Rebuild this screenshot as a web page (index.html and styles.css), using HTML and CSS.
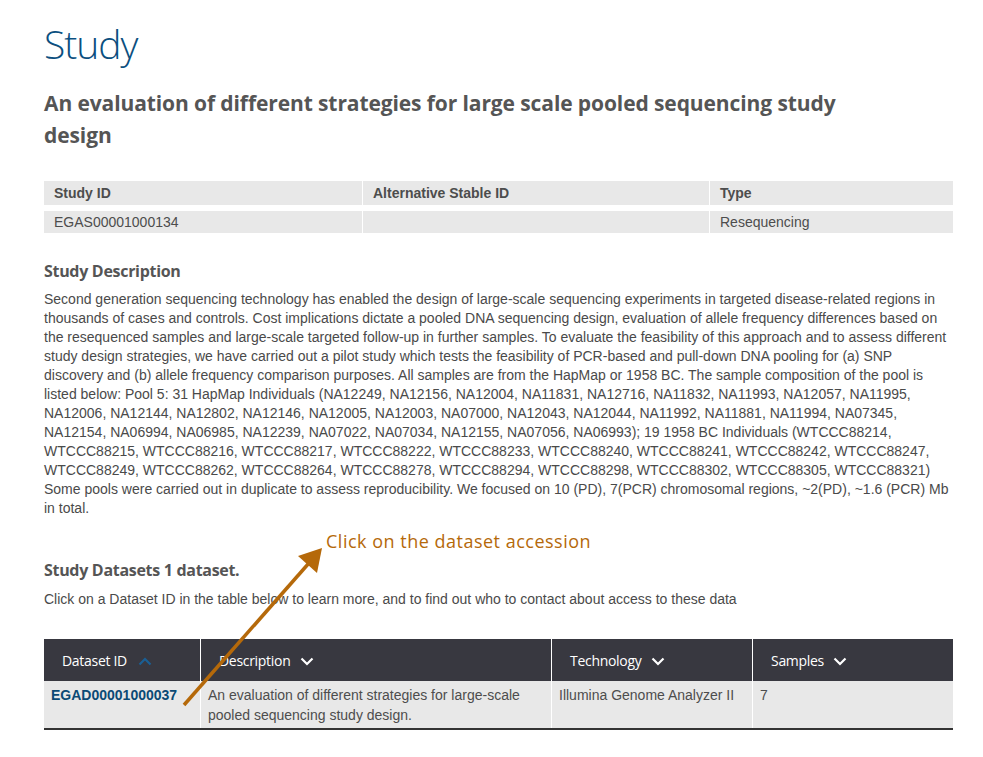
FILE: index.html
```html
<!DOCTYPE html>
<html>
<head>
<meta charset="utf-8">
<link rel="stylesheet" href="styles.css">
</head>
<body>
<div class="page">
  <h1 class="title">Study</h1>
  <h2 class="subtitle">An evaluation of different strategies for large scale pooled sequencing study design</h2>

  <table class="info">
    <thead>
      <tr><th class="c1">Study ID</th><th class="c2">Alternative Stable ID</th><th class="c3">Type</th></tr>
    </thead>
    <tbody>
      <tr><td>EGAS00001000134</td><td></td><td>Resequencing</td></tr>
    </tbody>
  </table>

  <h3 class="section">Study Description</h3>
  <p class="desc">Second generation sequencing technology has enabled the design of large-scale sequencing experiments in targeted disease-related regions in thousands of cases and controls. Cost implications dictate a pooled DNA sequencing design, evaluation of allele frequency differences based on the resequenced samples and large-scale targeted follow-up in further samples. To evaluate the feasibility of this approach and to assess different study design strategies, we have carried out a pilot study which tests the feasibility of PCR-based and pull-down DNA pooling for (a) SNP discovery and (b) allele frequency comparison purposes. All samples are from the HapMap or 1958 BC. The sample composition of the pool is listed below: Pool 5: 31 HapMap Individuals (NA12249, NA12156, NA12004, NA11831, NA12716, NA11832, NA11993, NA12057, NA11995, NA12006, NA12144, NA12802, NA12146, NA12005, NA12003, NA07000, NA12043, NA12044, NA11992, NA11881, NA11994, NA07345, NA12154, NA06994, NA06985, NA12239, NA07022, NA07034, NA12155, NA07056, NA06993); 19 1958 BC Individuals (WTCCC88214, WTCCC88215, WTCCC88216, WTCCC88217, WTCCC88222, WTCCC88233, WTCCC88240, WTCCC88241, WTCCC88242, WTCCC88247, WTCCC88249, WTCCC88262, WTCCC88264, WTCCC88278, WTCCC88294, WTCCC88298, WTCCC88302, WTCCC88305, WTCCC88321) Some pools were carried out in duplicate to assess reproducibility. We focused on 10 (PD), 7(PCR) chromosomal regions, ~2(PD), ~1.6 (PCR) Mb in total.</p>

  <h3 class="section datasets-title">Study Datasets 1 dataset.</h3>
  <p class="hint">Click on a Dataset ID in the table below to learn more, and to find out who to contact about access to these data</p>

  <table class="datasets">
    <thead>
      <tr>
        <th class="d1">Dataset ID <span class="chev up"><svg width="14" height="9" viewBox="0 0 14 9"><path d="M1.5 7.5 L7 2 L12.5 7.5" fill="none" stroke="#1a5f94" stroke-width="2.2"/></svg></span></th>
        <th class="d2">Description <span class="chev"><svg width="14" height="9" viewBox="0 0 14 9"><path d="M1.5 1.5 L7 7 L12.5 1.5" fill="none" stroke="#fff" stroke-width="2.2"/></svg></span></th>
        <th class="d3">Technology <span class="chev"><svg width="14" height="9" viewBox="0 0 14 9"><path d="M1.5 1.5 L7 7 L12.5 1.5" fill="none" stroke="#fff" stroke-width="2.2"/></svg></span></th>
        <th class="d4">Samples <span class="chev"><svg width="14" height="9" viewBox="0 0 14 9"><path d="M1.5 1.5 L7 7 L12.5 1.5" fill="none" stroke="#fff" stroke-width="2.2"/></svg></span></th>
      </tr>
    </thead>
    <tbody>
      <tr>
        <td><a class="acc" href="#">EGAD00001000037</a></td>
        <td>An evaluation of different strategies for large-scale pooled sequencing study design.</td>
        <td>Illumina Genome Analyzer II</td>
        <td>7</td>
      </tr>
    </tbody>
  </table>
</div>

<div class="callout">Click on the dataset accession</div>
<svg class="arrow" width="983" height="757" viewBox="0 0 983 757">
  <line x1="184" y1="705" x2="309" y2="563" stroke="#b5690a" stroke-width="3.5"/>
  <polygon points="322,548 317,573 298,556" fill="#b5690a"/>
</svg>
</body>
</html>
```
FILE: styles.css
```css
html, body {
  margin: 0;
  padding: 0;
  background: #fff;
}
body {
  font-family: "Liberation Sans", Arial, sans-serif;
  color: #4d4d4d;
  position: relative;
}
.page {
  padding: 22px 30px 0 44px;
  width: 909px;
}
.title {
  font-family: "Open Sans", sans-serif;
  font-weight: 300;
  font-size: 39px;
  line-height: 44px;
  color: #0b4f80;
  margin: 0 0 21px 0;
  letter-spacing: -1px;
}
.subtitle {
  font-family: "Open Sans", sans-serif;
  font-weight: 700;
  font-size: 21px;
  line-height: 32px;
  color: #555;
  margin: 0 0 30px 0;
  width: 840px;
  letter-spacing: -0.1px;
}
table {
  border-collapse: collapse;
  width: 909px;
}
.info th, .info td {
  background: #e8e8e8;
  text-align: left;
  font-size: 14px;
  padding: 0 10px;
  border-left: 1px solid #fff;
  color: #4d4d4d;
}
.info th:first-child, .info td:first-child { border-left: none; }
.info th {
  height: 24px;
  font-weight: bold;
  border-bottom: 6px solid #fff;
}
.info td {
  height: 22px;
}
.info .c1 { width: 298px; }
.info .c2 { width: 326px; }
.section {
  font-family: "Open Sans", sans-serif;
  font-weight: 700;
  font-size: 16px;
  line-height: 22px;
  color: #555;
  margin: 27px 0 8px 0;
  letter-spacing: -0.3px;
}
.desc {
  font-size: 14px;
  line-height: 19px;
  margin: 0;
  color: #4a4a4a;
}
.datasets-title {
  margin-top: 41px;
  margin-bottom: 9px;
}
.hint {
  font-size: 14px;
  line-height: 19px;
  margin: 0 0 30px 0;
  color: #4a4a4a;
}
.datasets th {
  background: #383840;
  color: #fff;
  font-family: "Open Sans", sans-serif;
  font-weight: 400;
  font-size: 14px;
  text-align: left;
  height: 42px;
  padding: 0 18px;
  border-left: 1px solid #fff;
  letter-spacing: -0.3px;
}
.datasets th:first-child { border-left: none; }
.datasets td {
  background: #e8e8e8;
  font-size: 14px;
  line-height: 20px;
  vertical-align: top;
  padding: 4px 7px 3px 7px;
  height: 38px;
  border-left: 1px solid #fff;
  border-bottom: 2px solid #333;
  color: #4d4d4d;
}
.datasets td:first-child { border-left: none; }
.datasets .d1 { width: 120px; }
.datasets .d2 { width: 314px; }
.datasets .d3 { width: 164px; }
.chev {
  display: inline-block;
  margin-left: 6px;
  vertical-align: middle;
}
.chev svg { display: block; }
.chev.up { margin-left: 8px; }
.acc {
  color: #0b4a75;
  font-weight: bold;
  text-decoration: none;
}
.callout {
  position: absolute;
  left: 326px;
  top: 529px;
  font-family: "Open Sans", sans-serif;
  font-size: 18px;
  color: #b5690a;
  letter-spacing: 0.5px;
}
.arrow {
  position: absolute;
  left: 0;
  top: 0;
  pointer-events: none;
}
```
